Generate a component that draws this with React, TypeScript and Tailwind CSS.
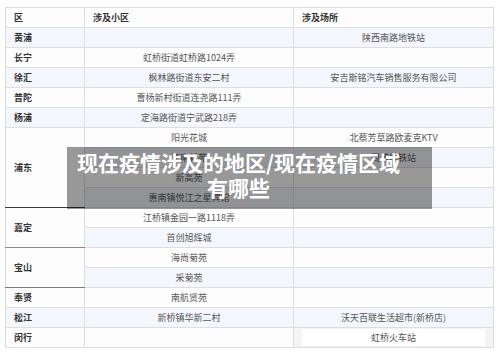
import React from 'react';

type Row = {
  district?: string;
  span?: number;
  area: string;
  place: string;
  // colour of the bottom border of the merged district cell
  edge?: string;
};

const rows: Row[] = [
  { district: '黄浦', area: '', place: '陕西南路地铁站' },
  { district: '长宁', area: '虹桥街道虹桥路1024弄', place: '' },
  { district: '徐汇', area: '枫林路街道东安二村', place: '安吉斯铭汽车销售服务有限公司' },
  { district: '普陀', area: '曹杨新村街道连尧路111弄', place: '' },
  { district: '杨浦', area: '定海路街道宁武路218弄', place: '' },
  { district: '浦东', span: 4, area: '阳光花城', place: '北蔡芳草路欧麦克KTV', edge: 'border-b-[#3a3a3a]' },
  { area: '江南新苑', place: '周浦地铁站' },
  { area: '新高苑', place: '' },
  { area: '惠南镇悦江之星宾馆', place: '' },
  { district: '嘉定', span: 2, area: '江桥镇金园一路1118弄', place: '', edge: 'border-b-[#8a8a8a]' },
  { area: '首创旭辉城', place: '' },
  { district: '宝山', span: 2, area: '海尚菊苑', place: '', edge: 'border-b-[#7a7a7a]' },
  { area: '采菊苑', place: '' },
  { district: '奉贤', area: '南航贤苑', place: '' },
  { district: '松江', area: '新桥镇华新二村', place: '沃天百联生活超市(新桥店)' },
  { district: '闵行', area: '', place: '虹桥火车站' },
];

const cell = 'h-[20px] p-0 border border-[#dedede] text-[9px] leading-[12px]';

export default function App() {
  return (
    <div
      className="w-[500px] h-[357px] bg-white overflow-hidden"
      style={{ fontFamily: '"Noto Sans CJK SC", "Noto Sans", sans-serif' }}
    >
      <div className="relative pt-[7px] pl-[5px]">
        <table className="w-[488px] table-fixed border-collapse">
          <colgroup>
            <col className="w-[79px]" />
            <col className="w-[209px]" />
            <col className="w-[200px]" />
          </colgroup>
          <thead>
            <tr className="bg-[#fdfdfd]">
              <th className={`${cell} pl-[8px] text-left font-bold text-[#333]`}>区</th>
              <th className={`${cell} pl-[8px] text-left font-bold text-[#333]`}>涉及小区</th>
              <th className={`${cell} pl-[8px] text-left font-bold text-[#333]`}>涉及场所</th>
            </tr>
          </thead>
          <tbody>
            {rows.map((r, i) => {
              const stripe = i % 2 === 0 ? 'bg-[#f3f6fc]' : 'bg-[#fdfdfd]';
              const last = i === rows.length - 1;
              return (
                <tr key={i} className={stripe}>
                  {r.district && (
                    <td
                      rowSpan={r.span}
                      className={`${cell} pl-[8px] font-bold text-[#333] ${r.span ? 'bg-[#fdfdfd]' : ''} ${r.edge ?? ''}`}
                    >
                      {r.district}
                    </td>
                  )}
                  <td className={`${cell} text-center text-[#555]`}>{r.area}</td>
                  {last ? (
                    <td className={`${cell} px-[8px] py-[1px] bg-[#f4f4f4]`}>
                      <div className="h-full bg-white text-center text-[#555] leading-[17px]">{r.place}</div>
                    </td>
                  ) : (
                    <td className={`${cell} text-center text-[#555]`}>{r.place}</td>
                  )}
                </tr>
              );
            })}
          </tbody>
        </table>

        {/* title banner laid over the table */}
        <div className="absolute left-[67px] top-[147px] w-[365px] h-[62px] bg-black/40 pl-[8px] pr-[30px] pt-[3px]">
          <p className="text-center text-white font-bold text-[21px] leading-[25px]">
            现在疫情涉及的地区/现在疫情区域有哪些
          </p>
        </div>
      </div>
    </div>
  );
}
